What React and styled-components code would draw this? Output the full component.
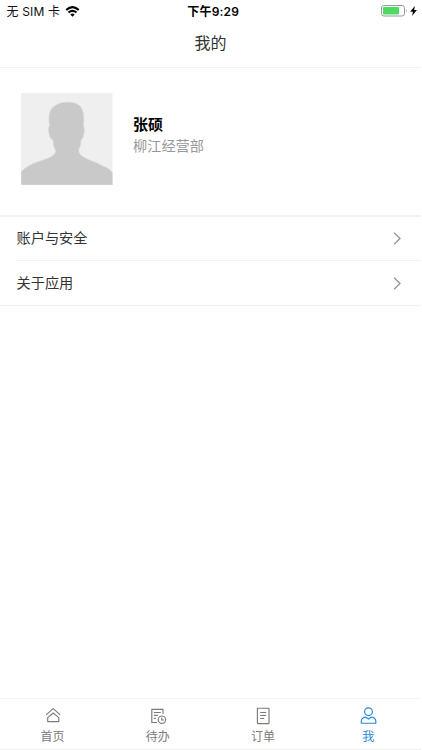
import { useState } from "react";
import styled, { createGlobalStyle } from "styled-components";

const GlobalStyle = createGlobalStyle`
  * {
    box-sizing: border-box;
  }

  body {
    margin: 0;
    background: #ffffff;
    font-family: "Liberation Sans", "Noto Sans CJK SC", sans-serif;
  }

  svg {
    display: block;
    flex-shrink: 0;
  }
`;

const Screen = styled.div`
  display: flex;
  flex-direction: column;
  width: 421px;
  height: 750px;
  overflow: hidden;
  color: #333333;
  background: #ffffff;
`;

const StatusBar = styled.div`
  display: grid;
  grid-template-columns: 1fr auto 1fr;
  align-items: center;
  height: 22px;
  padding: 0 4px 0 6.5px;
  font-family: Inter, "Noto Sans CJK SC", sans-serif;
  font-size: 12px;
  line-height: 21px;
  color: #111111;
`;

const Carrier = styled.div`
  display: flex;
  align-items: center;
  gap: 5px;
  letter-spacing: 0.15px;
  white-space: nowrap;

  span {
    padding-top: 1px;
  }
`;

const Clock = styled.span`
  padding: 1px 0 0 3px;
  font-weight: 600;
  letter-spacing: 0.2px;
  color: #000000;
`;

const Power = styled.div`
  display: flex;
  justify-content: flex-end;
  align-items: center;
  gap: 2px;
`;

const Header = styled.header`
  height: 46px;
  border-bottom: 1px solid #f2f2f2;
  font-size: 16px;
  line-height: 44px;
  text-align: center;
`;

const Profile = styled.section`
  display: flex;
  gap: 20px;
  height: 149px;
  padding: 25px 21px 0;
  border-bottom: 2px solid #f2f2f2;
`;

const ProfileInfo = styled.div`
  padding-top: 21px;
`;

const Name = styled.div`
  font-size: 15px;
  font-weight: 700;
  line-height: 22px;
  color: #000000;
`;

const Department = styled.div`
  font-size: 14.2px;
  line-height: 21px;
  color: #999999;
`;

const Menu = styled.ul`
  flex: 1;
  margin: 0;
  padding: 0;
  list-style: none;
`;

const MenuItem = styled.li`
  display: flex;
  justify-content: space-between;
  align-items: center;
  height: ${({ $last }) => ($last ? "45px" : "44px")};
  margin-left: ${({ $last }) => ($last ? "0" : "16px")};
  padding: 0 20px 0 ${({ $last }) => ($last ? "16.5px" : "0.5px")};
  border-bottom: 1px solid #f2f2f2;
  font-size: 14.2px;
  line-height: 20px;
  cursor: pointer;

  span {
    padding-bottom: ${({ $last }) => ($last ? "0" : "2px")};
  }
`;

const TabBar = styled.nav`
  display: grid;
  grid-template-columns: repeat(4, 1fr);
  height: 52px;
  border-top: 1px solid #f3f3f3;
  border-bottom: 1px solid #efefef;
`;

const Tab = styled.button`
  display: flex;
  flex-direction: column;
  align-items: center;
  padding: 8px 0 0;
  border: 0;
  background: none;
  font: inherit;
  font-size: 12px;
  line-height: 18px;
  gap: 3px;
  color: ${({ $active }) => ($active ? "#2486dc" : "#7b7b7b")};
  cursor: pointer;
`;

const WifiIcon = () => (
  <svg width="15" height="11" viewBox="0 0 14 11" fill="none" stroke="#000" strokeWidth="2">
    <path d="M.7 4Q7-1.7 13.3 4M3 6.6Q7 3.2 11 6.6" />
    <path d="M4.8 8.4Q7 6.7 9.2 8.4L7 10.7Z" fill="#000" stroke="none" />
  </svg>
);

const BatteryIcon = () => (
  <svg width="27" height="12" viewBox="0 0 27 12" fill="none">
    <rect x=".5" y=".5" width="23" height="10.5" rx="2.4" stroke="#999" />
    <rect x="2" y="2" width="16" height="7.5" rx=".8" fill="#4cd964" />
    <path d="M25 4Q26.5 5.8 25 7.6Z" fill="#999" />
  </svg>
);

const BoltIcon = () => (
  <svg width="7" height="10" viewBox="0 0 7 10">
    <path d="M4.8 0L.2 5.7H3L2 10 6.9 4H4.2Z" fill="#000" />
  </svg>
);

const Avatar = () => (
  <svg width="92" height="92" viewBox="0 0 92 92">
    <rect width="91.5" height="92" rx="1" fill="#efefef" />
    <path
      d="M0 92V79Q2 76 9 72C17 68 27 66 31 63Q36 60 34 56Q32 54 32 47Q29 46 28 41L27.3 36Q27.3 34 28.5 33Q26.5 20 31 15Q37 9 46 9Q56 9 60 14Q64 20 62.5 33Q64 35 63 41Q62 46 60 47Q60 53 58 56Q57 60 61 63C67 67 75 69 82 73Q90 76 91.5 80V92Z"
      fill="#c9c9c9"
      stroke="#dedede"
      strokeWidth=".7"
    />
  </svg>
);

const ChevronIcon = () => (
  <svg width="8" height="13" viewBox="0 0 8 13" fill="none" stroke="#8f8f8f" strokeWidth="1.3">
    <path d="M1 .6L7 6.5 1 12.4" />
  </svg>
);

const TabIcon = ({ children }) => (
  <svg
    width="18"
    height="18"
    viewBox="0 0 18 18"
    fill="none"
    stroke="currentColor"
    strokeWidth="1.15"
    strokeLinejoin="round"
  >
    {children}
  </svg>
);

const HomeIcon = () => (
  <TabIcon>
    <path d="M2.2 7.9L9.2 1.6 16.2 7.9M3.7 10.6L9.2 6 14.8 10.6V14.6H3.7Z" />
  </TabIcon>
);

const TodoIcon = () => (
  <TabIcon>
    <path d="M14 7V2.3H2.8V15.5H8M4.8 5.5H11.8M4.8 8.4H8.8M4.8 11.3H6.8" />
    <circle cx="12.9" cy="12.7" r="3.7" />
    <path d="M12.7 10.5V13H14.8" />
  </TabIcon>
);

const OrderIcon = () => (
  <TabIcon>
    <rect x="3.4" y="1.2" width="11.6" height="15.4" rx=".5" />
    <path d="M6.2 5.5H12.2M6.2 8.5H12.2M6.2 11.5H10.2" />
  </TabIcon>
);

const MeIcon = () => (
  <TabIcon>
    <circle cx="9.5" cy="4.7" r="3.9" />
    <path d="M6.4 10Q2.6 10.8 2.3 14V16.2H16.8V14Q16.5 10.8 12.6 10L9.5 12.1Z" />
  </TabIcon>
);

const menuItems = ["账户与安全", "关于应用"];

const tabs = [
  { title: "首页", icon: HomeIcon },
  { title: "待办", icon: TodoIcon },
  { title: "订单", icon: OrderIcon },
  { title: "我", icon: MeIcon },
];

export default function App() {
  const [active, setActive] = useState(3);

  return (
    <>
      <GlobalStyle />
      <Screen>
        <StatusBar>
          <Carrier>
            <span>无 SIM 卡</span>
            <WifiIcon />
          </Carrier>
          <Clock>下午9:29</Clock>
          <Power>
            <BatteryIcon />
            <BoltIcon />
          </Power>
        </StatusBar>

        <Header>我的</Header>

        <Profile>
          <Avatar />
          <ProfileInfo>
            <Name>张硕</Name>
            <Department>柳江经营部</Department>
          </ProfileInfo>
        </Profile>

        <Menu>
          {menuItems.map((title, index) => (
            <MenuItem key={title} $last={index === menuItems.length - 1}>
              <span>{title}</span>
              <ChevronIcon />
            </MenuItem>
          ))}
        </Menu>

        <TabBar>
          {tabs.map((tab, index) => (
            <Tab key={tab.title} $active={active === index} onClick={() => setActive(index)}>
              <tab.icon />
              <span>{tab.title}</span>
            </Tab>
          ))}
        </TabBar>
      </Screen>
    </>
  );
}
